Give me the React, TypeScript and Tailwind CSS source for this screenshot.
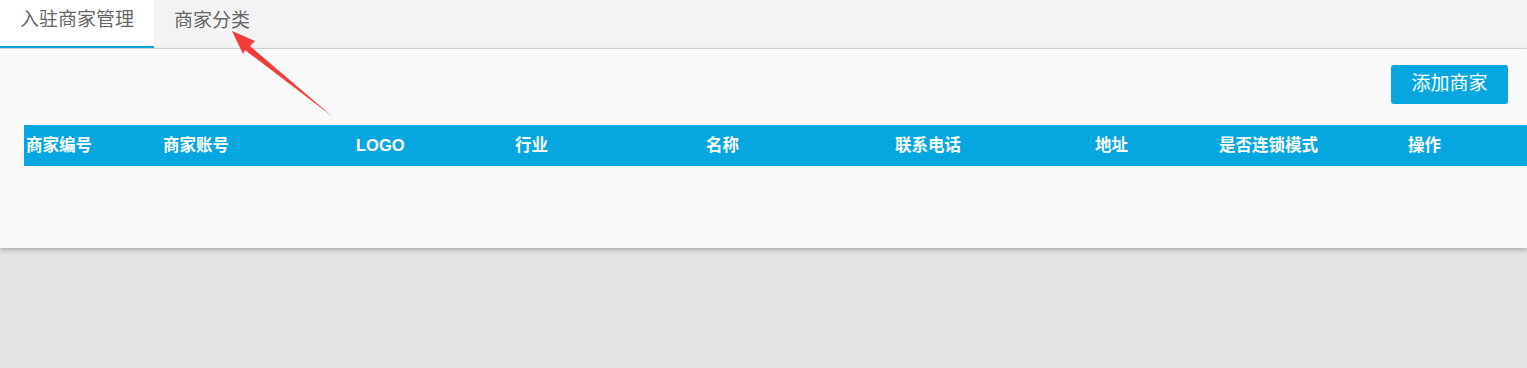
const font = { fontFamily: '"Liberation Sans", "Noto Sans CJK SC", sans-serif' }

const columns = [
  { label: '商家编号', w: 'w-[137px]' },
  { label: '商家账号', w: 'w-[193px]' },
  { label: 'LOGO', w: 'w-[159px]' },
  { label: '行业', w: 'w-[191px]' },
  { label: '名称', w: 'w-[189px]' },
  { label: '联系电话', w: 'w-[200px]' },
  { label: '地址', w: 'w-[124px]' },
  { label: '是否连锁模式', w: 'w-[189px]' },
  { label: '操作', w: 'w-[160px]' },
]

function Tabs() {
  return (
    <div className="flex h-[49px] border-b border-[#d9d9d9] bg-[#f3f3f3]">
      <div className="flex h-[48px] items-center border-b-2 border-[#0aa6e0] bg-white px-5 pb-[6px] text-[19px] text-[#666]">
        入驻商家管理
      </div>
      <div className="flex h-[48px] items-center px-5 pb-[6px] text-[19px] text-[#666]">
        商家分类
      </div>
    </div>
  )
}

export default function App() {
  return (
    <div className="relative h-[368px] w-full overflow-hidden bg-[#e3e3e3]" style={font}>
      <Tabs />
      <div className="h-[199px] overflow-hidden bg-[#fafafa] shadow-[0_2px_5px_rgba(0,0,0,0.25)]">
        <div className="flex justify-end pt-4 pr-[19px]">
          <button className="h-[39px] w-[117px] rounded-[3px] bg-[#06a7e0] text-[19px] text-white">
            添加商家
          </button>
        </div>
        <div className="mt-[21px] ml-6 flex h-[41px] w-max items-center bg-[#06a7e0]">
          {columns.map((c) => (
            <div key={c.label} className={`${c.w} shrink-0 pl-[2px] text-[16.5px] font-bold text-white`}>
              {c.label}
            </div>
          ))}
        </div>
      </div>
      <svg className="absolute left-0 top-0" width="360" height="130" viewBox="0 0 360 130">
        <polygon points="232,31 255,41 250,46 333,117 245,50 243,54" fill="#f53a3a" />
      </svg>
    </div>
  )
}
